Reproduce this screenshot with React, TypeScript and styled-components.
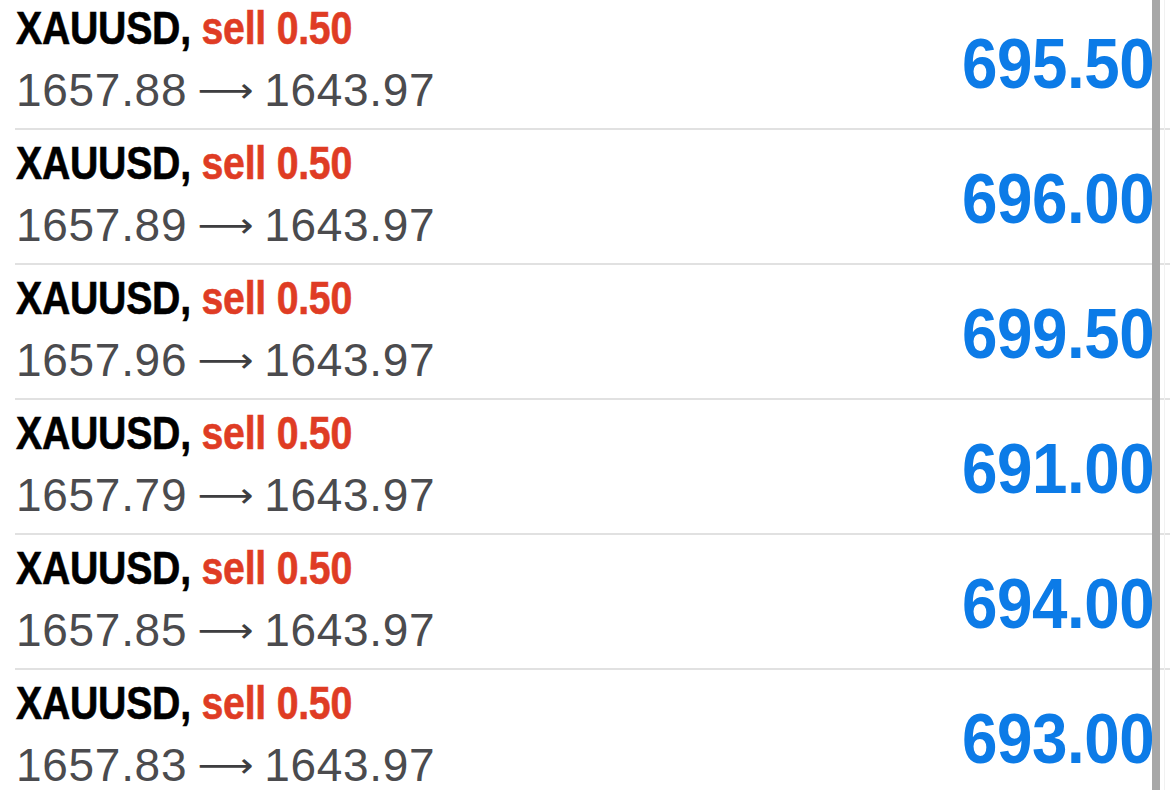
import React from "react";
import styled, { createGlobalStyle } from "styled-components";

const Global = createGlobalStyle`
  html, body {
    margin: 0;
    padding: 0;
    background: #ffffff;
    overflow: hidden;
    font-family: "Liberation Sans", Arial, sans-serif;
  }
`;

const Page = styled.div`
  width: 1170px;
  height: 790px;
  overflow: hidden;
  background: #ffffff;
`;

const List = styled.div`
  display: flex;
  flex-direction: column;
  margin-top: -5px;
`;

const Row = styled.div`
  box-sizing: border-box;
  height: 135px;
  margin-left: 15px;
  border-bottom: 2px solid #e1e1e1;
  display: flex;
  align-items: center;
  justify-content: space-between;
  padding-right: 16px;
`;

const Info = styled.div`
  display: flex;
  flex-direction: column;
  align-self: flex-start;
  padding-top: 6px;
  padding-left: 1px;
`;

const Title = styled.div`
  font-size: 47px;
  line-height: 53px;
  font-weight: 700;
  color: #000000;
  white-space: nowrap;
  transform: scaleX(0.835);
  transform-origin: left center;
  letter-spacing: -0.3px;
  -webkit-text-stroke: 0.6px currentColor;
`;

const Side = styled.span`
  color: #df3c24;
`;

const Prices = styled.div`
  margin-top: 10px;
  display: flex;
  align-items: center;
  font-size: 46px;
  line-height: 52px;
  font-weight: 400;
  color: #4b4b4e;
  white-space: nowrap;
  letter-spacing: 0.7px;
`;

const Arrow = styled.span`
  display: inline-block;
  width: 50px;
  margin: 0 13px 0 14px;
  font-family: "DejaVu Sans", "Liberation Sans", sans-serif;
  font-size: 34px;
  line-height: 52px;
  text-align: center;
  color: #3e3e40;
  overflow: visible;
  transform: scaleX(1.15);
`;

const Profit = styled.div`
  font-size: 70px;
  line-height: 78px;
  font-weight: 700;
  color: #0c7be7;
  white-space: nowrap;
  transform: scaleX(0.91);
  transform-origin: right center;
  letter-spacing: -0.5px;
  margin-top: 4px;
`;

const ScrollBar = styled.div`
  position: fixed;
  top: 0;
  left: 1152px;
  width: 8px;
  height: 790px;
  background: #a7a7a7;
`;

const EdgeLine = styled.div`
  position: fixed;
  top: 0;
  left: 1164px;
  width: 1px;
  height: 790px;
  background: #f1f1f1;
`;

const trades = [
  { open: "1657.88", close: "1643.97", profit: "695.50" },
  { open: "1657.89", close: "1643.97", profit: "696.00" },
  { open: "1657.96", close: "1643.97", profit: "699.50" },
  { open: "1657.79", close: "1643.97", profit: "691.00" },
  { open: "1657.85", close: "1643.97", profit: "694.00" },
  { open: "1657.83", close: "1643.97", profit: "693.00" },
];

export default function App() {
  return (
    <Page>
      <Global />
      <List>
        {trades.map((t, i) => (
          <Row key={i}>
            <Info>
              <Title>
                XAUUSD, <Side>sell 0.50</Side>
              </Title>
              <Prices>
                <span>{t.open}</span>
                <Arrow>⟶</Arrow>
                <span>{t.close}</span>
              </Prices>
            </Info>
            <Profit>{t.profit}</Profit>
          </Row>
        ))}
      </List>
      <ScrollBar />
      <EdgeLine />
    </Page>
  );
}
